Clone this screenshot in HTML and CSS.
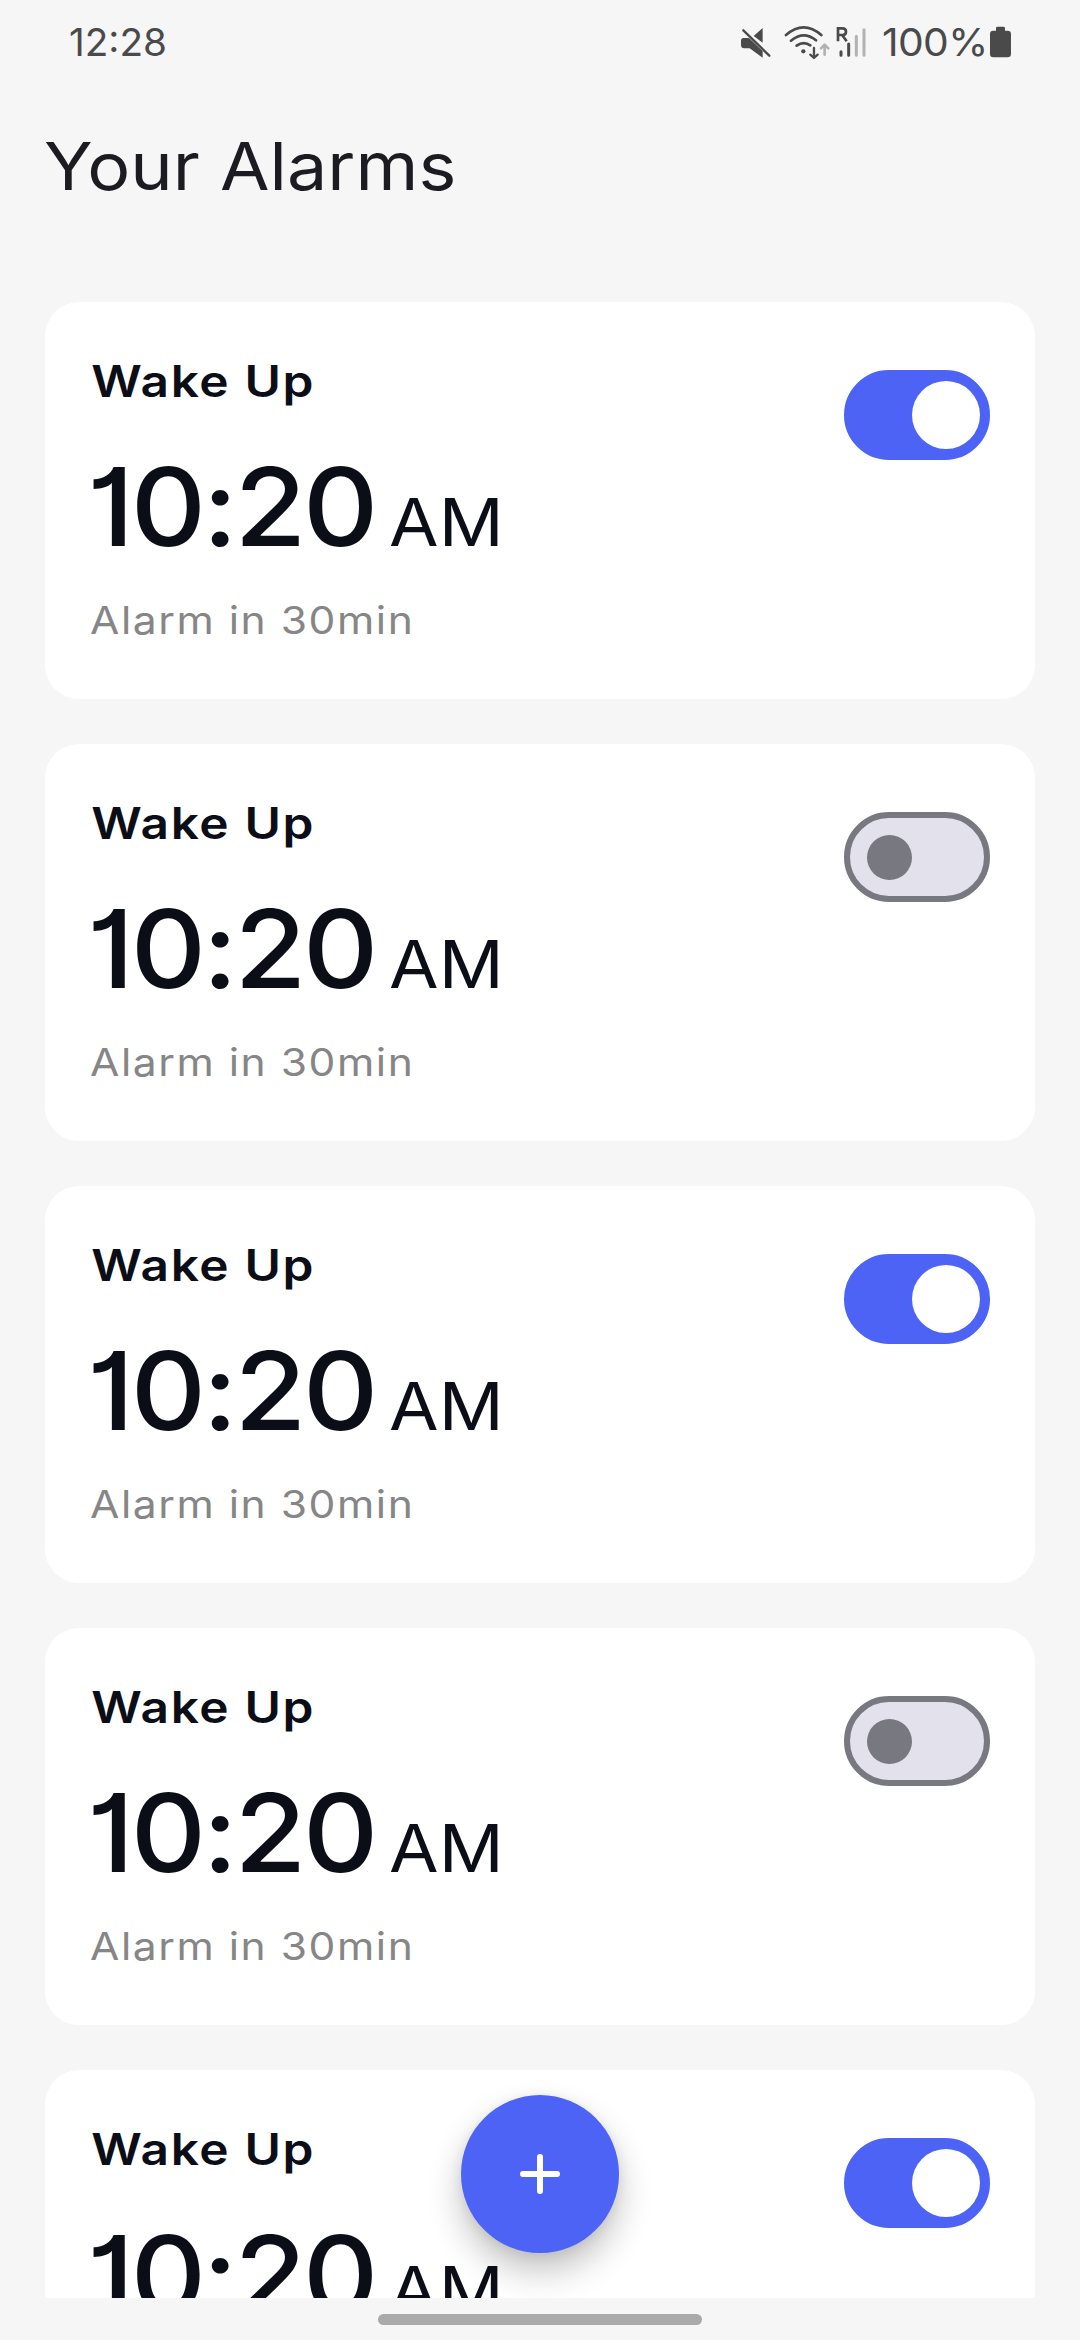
FILE: index.html
```
<!DOCTYPE html>
<html lang="en">
<head>
<meta charset="utf-8">
<title>Your Alarms</title>
<link rel="stylesheet" href="styles.css">
</head>
<body>
<div class="screen">
  <header class="status">
    <span class="clock">12:28</span>
    <div class="indicators">
      <svg class="mute" viewBox="60 45 100 105"><path d="M104 78L131 54V98ZM66 92Q66 84 74 84H90L131 123V143L92 115H76Q66 115 66 105Z" fill="#4a4a4a"/><path d="M77 56L157 134" stroke="#f6f6f6" stroke-width="6"/><path d="M73 61L151 137" stroke="#4a4a4a" stroke-width="7" stroke-linecap="round"/></svg>
      <svg class="wifi" viewBox="195 45 145 105" fill="none" stroke-width="8" stroke-linecap="round" stroke-linejoin="round"><g stroke="#4a4a4a"><path d="M201 75Q254 29 307 75M216 92Q254 61 291 91M233 107Q254 92 274 106"/><path d="M285 114V142M274 134L285 144L296 134" stroke-width="7"/></g><circle cx="253" cy="124" r="6.5" fill="#4a4a4a"/><path d="M317 134V105M306 115L317 104L328 115" stroke="#b2b2b2"/></svg>
      <svg class="signal" viewBox="345 45 105 105" stroke-linecap="round" fill="none"><path d="M357 94V55H370Q381 55 381 65Q381 75 370 75H358M370 76L383 94" stroke="#4a4a4a" stroke-width="8" stroke-linecap="butt"/><path d="M366 125V136M389 102V136" stroke="#4a4a4a" stroke-width="9"/><path d="M412 79V136M435 59V136" stroke="#b2b2b2" stroke-width="9"/></svg>
      <span class="charge">100%</span>
      <svg class="battery" viewBox="810 45 70 105"><path d="M831 62V54Q831 50 836 50H853Q858 50 858 54V62H866Q876 62 876 72V132Q876 142 866 142H823Q813 142 813 132V72Q813 62 823 62Z" fill="#4a4a4a"/></svg>
    </div>
  </header>
  <h1 class="title">Your Alarms</h1>
  <main class="list">
    <section class="card"><div><h2 class="name">Wake Up</h2><p class="time"><span class="digits">10:20</span><span class="period">AM</span></p><p class="note">Alarm in 30min</p></div><div class="switch on"><i class="knob"></i></div></section>
    <section class="card"><div><h2 class="name">Wake Up</h2><p class="time"><span class="digits">10:20</span><span class="period">AM</span></p><p class="note">Alarm in 30min</p></div><div class="switch"><i class="knob"></i></div></section>
    <section class="card"><div><h2 class="name">Wake Up</h2><p class="time"><span class="digits">10:20</span><span class="period">AM</span></p><p class="note">Alarm in 30min</p></div><div class="switch on"><i class="knob"></i></div></section>
    <section class="card"><div><h2 class="name">Wake Up</h2><p class="time"><span class="digits">10:20</span><span class="period">AM</span></p><p class="note">Alarm in 30min</p></div><div class="switch"><i class="knob"></i></div></section>
    <section class="card"><div><h2 class="name">Wake Up</h2><p class="time"><span class="digits">10:20</span><span class="period">AM</span></p><p class="note">Alarm in 30min</p></div><div class="switch on"><i class="knob"></i></div></section>
  </main>
  <div class="add"><svg viewBox="0 0 40 40"><path d="M20 3V37M3 20H37" stroke="#fff" stroke-width="6" stroke-linecap="round"/></svg></div>
  <footer class="navbar"><div class="handle"></div></footer>
</div>
</body>
</html>
```
FILE: styles.css
```
* { box-sizing: border-box; margin: 0; padding: 0; }
body { background: #f6f6f6; font-family: Inter, "Open Sans", sans-serif; }
.screen { position: relative; width: 1080px; height: 2340px; overflow: hidden; display: flex; flex-direction: column; }
svg { display: block; flex: none; }

.status { height: 84px; flex: none; padding: 17px 66px 0 69px; display: flex; justify-content: space-between; color: #4a4a4a; font-size: 38.7px; line-height: 50px; font-weight: 370; }
.clock { letter-spacing: 0; }
.indicators { display: flex; width: 275px; }
.indicators svg { height: 35px; margin-top: 8px; }
.mute { width: 33.3px; }
.wifi { width: 48.3px; margin-left: 11.7px; }
.signal { width: 35px; margin-left: 1.7px; }
.charge { width: 107px; margin: 0 0 0 13px; letter-spacing: -0.6px; transform: scaleX(1.055); transform-origin: left; }
.battery { width: 23.3px; }

.title { flex: none; margin: 42px 0 0 44px; height: 176px; font-size: 65.6px; line-height: 80px; font-weight: 420; color: #1c1b21; transform: scaleX(1.095); transform-origin: left; white-space: nowrap; }

.list { flex: 1; min-height: 0; overflow: hidden; padding: 0 45px; display: flex; flex-direction: column; gap: 45px; }
.card { flex: none; height: 397px; background: #fff; border-radius: 34px; padding: 49px 45px 0; display: flex; justify-content: space-between; color: #0b0e17; }
.name { font-size: 43.5px; line-height: 60px; font-weight: 580; letter-spacing: 1.4px; transform: scaleX(1.14); transform-origin: left; padding-left: 1px; }
.time { margin-top: 31px; height: 130px; line-height: 130px; white-space: nowrap; display: flex; align-items: baseline; }
.digits { font-size: 108.5px; font-weight: 450; width: 299px; letter-spacing: -3.2px; transform: scaleX(1.075); transform-origin: left; font-feature-settings: "cv01"; text-indent: -3px; }
.period { font-size: 65.4px; font-weight: 420; transform: scaleX(1.1); transform-origin: left; }
.note { margin-top: 22px; font-size: 38.5px; line-height: 52px; font-weight: 440; letter-spacing: 1.4px; color: #868686; transform: scaleX(1.105); transform-origin: left; }

.switch { width: 146px; height: 90px; margin-top: 19px; border: 6px solid #787880; border-radius: 45px; background: #e3e1ec; display: flex; align-items: center; padding-left: 17px; }
.knob { width: 45px; height: 45px; border-radius: 50%; background: #787880; }
.switch.on { background: #4c63f6; border-color: #4c63f6; padding-left: 62px; }
.on .knob { width: 68px; height: 68px; background: #fff; }

.add { position: absolute; left: 461px; top: 2095px; width: 158px; height: 158px; border-radius: 50%; background: #4c63f6; display: flex; align-items: center; justify-content: center; box-shadow: 0 18px 34px rgba(0,0,0,.24), 0 2px 12px rgba(0,0,0,.08); }
.add svg { width: 40px; height: 40px; }
.navbar { position: relative; height: 42px; flex: none; background: #f6f6f6; padding-top: 16px; }
.handle { width: 324px; height: 11px; margin: 0 auto; border-radius: 6px; background: #aaa; }
```
